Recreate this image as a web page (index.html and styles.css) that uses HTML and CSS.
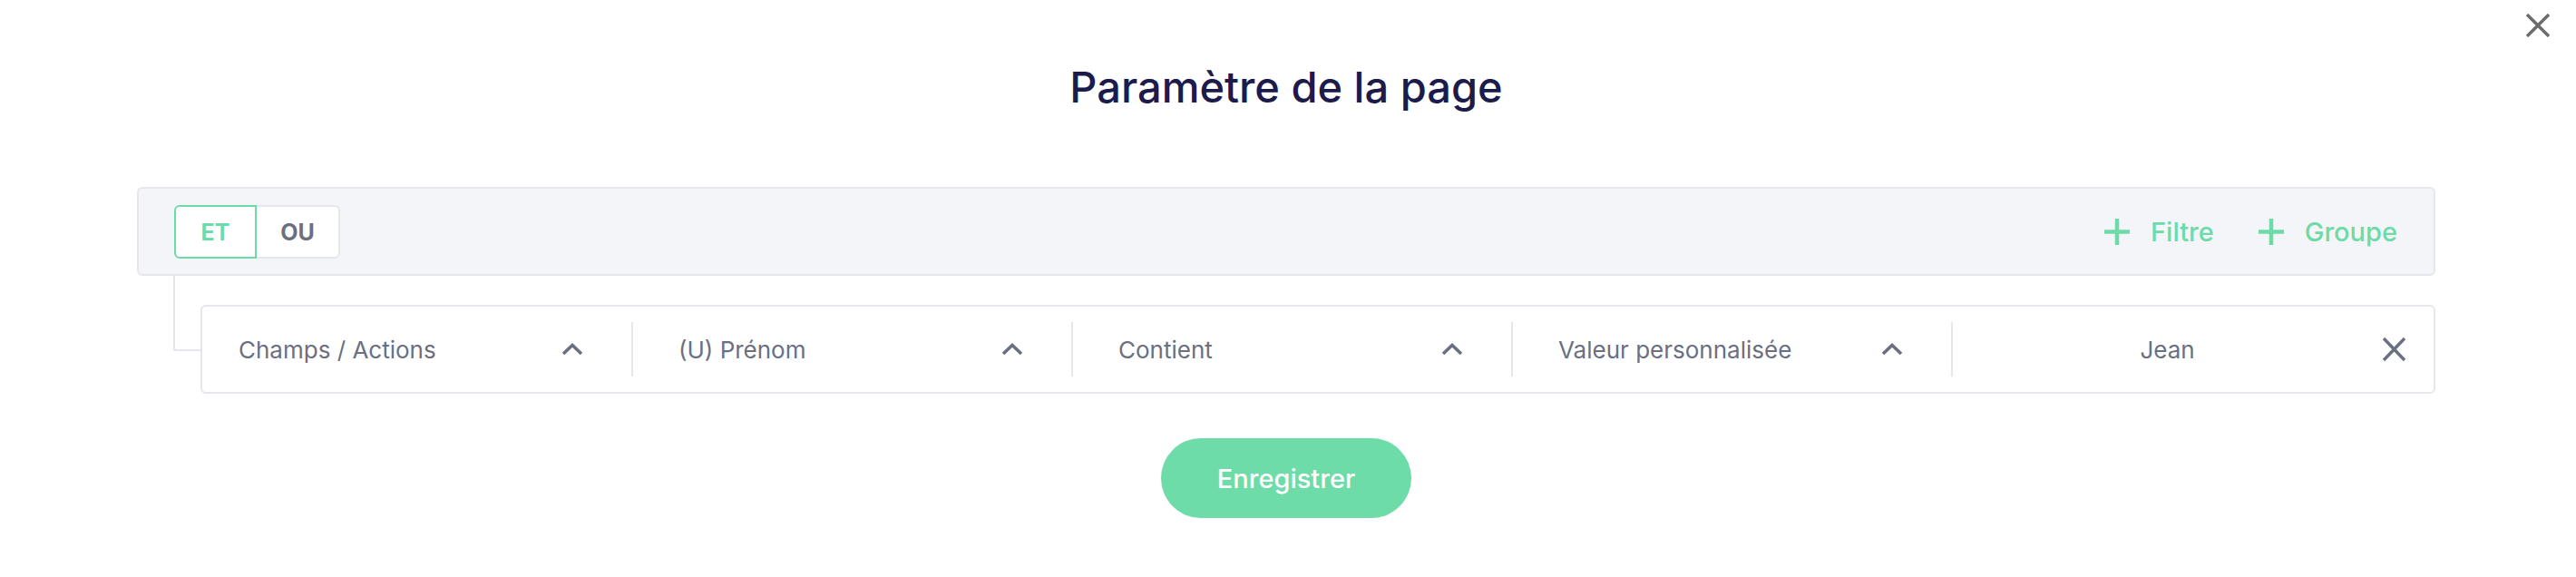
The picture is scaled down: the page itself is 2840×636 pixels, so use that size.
FILE: index.html
```html
<!DOCTYPE html>
<html lang="fr">
<head>
    <meta charset="UTF-8">
    <link rel="stylesheet" href="styles.css">
</head>
<body>
    <div class="modal">
        <button class="close" aria-label="Fermer">
            <svg width="26" height="26" viewBox="0 0 26 26"><path d="M1 1L25 25M25 1L1 25" stroke="#6c6c6e" stroke-width="3.4" fill="none"/></svg>
        </button>

        <h1 class="title">Paramètre de la page</h1>

        <div class="group-bar">
            <div class="toggle">
                <span class="toggle-btn active">ET</span>
                <span class="toggle-btn">OU</span>
            </div>
            <div class="bar-actions">
                <span class="add-link">
                    <svg width="28" height="29" viewBox="0 0 28 29"><path d="M14 0V29M0 14.5H28" stroke="#6ddba8" stroke-width="4.5" fill="none"/></svg>
                    Filtre
                </span>
                <span class="add-link">
                    <svg width="28" height="29" viewBox="0 0 28 29"><path d="M14 0V29M0 14.5H28" stroke="#6ddba8" stroke-width="4.5" fill="none"/></svg>
                    Groupe
                </span>
            </div>
        </div>

        <div class="filters">
            <div class="filter-row">
                <div class="seg seg-first">
                    <span class="seg-label">Champs / Actions</span>
                    <svg class="chev" width="24" height="14" viewBox="0 0 24 14"><path d="M2 12L12 2.5L22 12" stroke="#6b6f82" stroke-width="3.6" fill="none"/></svg>
                </div>
                <div class="seg">
                    <span class="seg-label">(U) Prénom</span>
                    <svg class="chev" width="24" height="14" viewBox="0 0 24 14"><path d="M2 12L12 2.5L22 12" stroke="#6b6f82" stroke-width="3.6" fill="none"/></svg>
                </div>
                <div class="seg">
                    <span class="seg-label">Contient</span>
                    <svg class="chev" width="24" height="14" viewBox="0 0 24 14"><path d="M2 12L12 2.5L22 12" stroke="#6b6f82" stroke-width="3.6" fill="none"/></svg>
                </div>
                <div class="seg">
                    <span class="seg-label">Valeur personnalisée</span>
                    <svg class="chev" width="24" height="14" viewBox="0 0 24 14"><path d="M2 12L12 2.5L22 12" stroke="#6b6f82" stroke-width="3.6" fill="none"/></svg>
                </div>
                <div class="seg seg-last">
                    <span class="seg-value">Jean</span>
                    <svg class="remove" width="27" height="28" viewBox="0 0 27 28"><path d="M2 2L25 26M25 2L2 26" stroke="#6b6f82" stroke-width="3.4" fill="none"/></svg>
                </div>
            </div>
        </div>

        <div class="footer">
            <button class="save">Enregistrer</button>
        </div>
    </div>
</body>
</html>
```

FILE: styles.css
```css
body {
    margin: 0;
    background: #fff;
    font-family: Inter, "Noto Sans", sans-serif;
}
.modal {
    position: relative;
    padding: 68px 155px 0 151px;
}
.close {
    position: absolute;
    top: 15px;
    right: 29px;
    padding: 0;
    border: 0;
    background: none;
    width: 26px;
    height: 26px;
}
.close svg {
    display: block;
}
.title {
    margin: 0;
    text-align: center;
    font-size: 47px;
    line-height: 56px;
    font-weight: 500;
    color: #1c1b4b;
}
.group-bar {
    margin-top: 82px;
    height: 98px;
    box-sizing: border-box;
    border: 2px solid #e5e7ec;
    border-radius: 6px;
    background: #f4f5f8;
    display: flex;
    align-items: center;
    justify-content: space-between;
    padding: 1px 40px 0 39px;
}
.toggle {
    display: flex;
}
.toggle-btn {
    height: 59px;
    box-sizing: border-box;
    display: flex;
    align-items: center;
    justify-content: center;
    font-size: 25px;
    font-weight: 700;
    background: #fff;
    color: #6b6f82;
}
.toggle-btn.active {
    width: 91px;
    border: 2px solid #6ddba8;
    border-radius: 6px 0 0 6px;
    color: #6ddba8;
}
.toggle-btn + .toggle-btn {
    width: 92px;
    border: 2px solid #e5e7ec;
    border-left: 0;
    border-radius: 0 6px 6px 0;
}
.bar-actions {
    display: flex;
    align-items: center;
    gap: 49px;
}
.add-link {
    display: flex;
    align-items: center;
    gap: 23px;
    font-size: 29px;
    font-weight: 500;
    color: #6ddba8;
}
.filters {
    position: relative;
    padding: 32px 0 0 70px;
}
.filters::before {
    content: "";
    position: absolute;
    left: 40px;
    top: 0;
    width: 30px;
    height: 81px;
    border-left: 2px solid #e5e7ec;
    border-bottom: 2px solid #e5e7ec;
}
.filter-row {
    height: 98px;
    box-sizing: border-box;
    border: 2px solid #e5e7ec;
    border-radius: 6px;
    background: #fff;
    display: flex;
    align-items: center;
}
.seg {
    flex: 0 0 485px;
    box-sizing: border-box;
    height: 60px;
    display: flex;
    align-items: center;
    padding: 0 53px 0 50px;
    border-left: 2px solid #e5e7ec;
    font-size: 26px;
    color: #6b6f82;
}
.seg-first {
    flex-basis: 473px;
    border-left: 0;
    padding-left: 40px;
}
.seg-label {
    flex: 1;
}
.seg-last {
    flex: 1;
    padding: 0 30px 0 0;
}
.seg-value {
    flex: 1;
    text-align: center;
}
.footer {
    display: flex;
    justify-content: center;
    margin-top: 49px;
}
.save {
    width: 276px;
    height: 88px;
    border: 0;
    border-radius: 44px;
    background: #6ddca9;
    color: #fff;
    font-family: Inter, "Noto Sans", sans-serif;
    font-size: 29px;
    font-weight: 500;
}
```
